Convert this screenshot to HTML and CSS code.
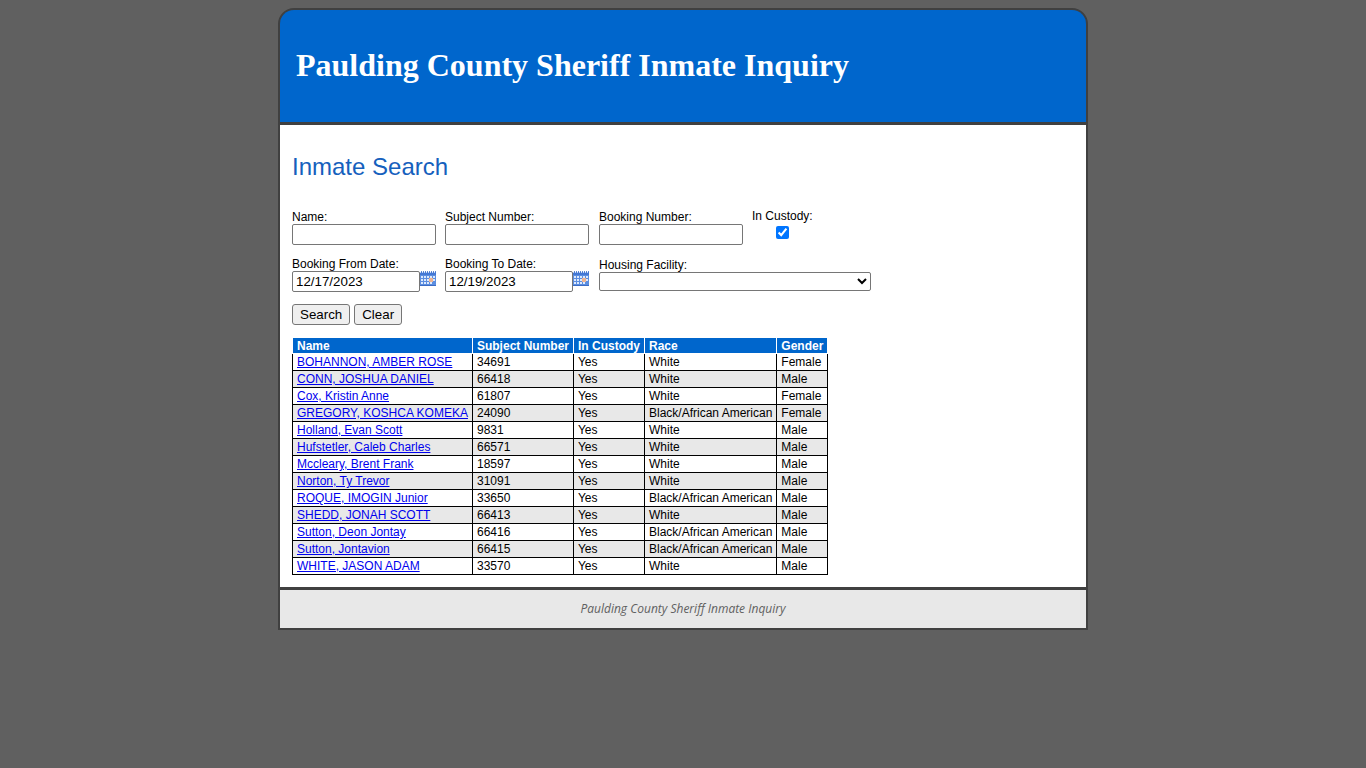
FILE: index.html
```html
<!DOCTYPE html>
<html lang="en">
<head>
    <meta charset="UTF-8">
    <meta name="viewport" content="width=device-width, initial-scale=1.0">
    <title>Paulding County Sheriff Inmate Inquiry</title>
    <link rel="stylesheet" href="styles.css">
</head>
<body>
    <!-- calendar icon used by both date fields -->
    <svg class="sprite" width="0" height="0" aria-hidden="true">
        <symbol id="calendar" viewBox="0 0 16 16">
            <rect x="0" y="1" width="16" height="14" fill="#5c8ee0"/>
            <rect x="0" y="1" width="16" height="3" fill="#4478d4"/>
            <path d="M1 0h1v1h-1zM3 0h1v1h-1zM5 0h1v1h-1zM7 0h1v1h-1zM9 0h1v1h-1zM11 0h1v1h-1zM13 0h1v1h-1zM15 0h1v1h-1z" fill="#5f88cf"/>
            <path d="M0 1h1v1h-1zM2 1h1v1h-1zM4 1h1v1h-1zM6 1h1v1h-1zM8 1h1v1h-1zM10 1h1v1h-1zM12 1h1v1h-1zM14 1h1v1h-1z" fill="#c3d6f6"/>
            <path d="M1 5h2v2h-2zM4 5h2v2h-2zM7 5h2v2h-2zM10 5h2v2h-2zM13 5h2v2h-2zM1 8h2v2h-2zM4 8h2v2h-2zM7 8h2v2h-2zM13 8h2v2h-2zM1 11h2v2h-2zM4 11h2v2h-2zM7 11h2v2h-2zM10 11h2v2h-2z" fill="#dce9fd"/>
            <rect x="9" y="7" width="4" height="4" fill="#ecb391"/>
            <rect x="0" y="14" width="16" height="1" fill="#3c6cc4"/>
        </symbol>
    </svg>

    <div class="page">
        <header class="header">
            <h1>Paulding County Sheriff Inmate Inquiry</h1>
        </header>

        <main class="main">
            <h2>Inmate Search</h2>

            <form>
                <div class="fields">
                    <div class="field">
                        <label for="name">Name:</label>
                        <input type="text" id="name">
                    </div>
                    <div class="field">
                        <label for="subjectNumber">Subject Number:</label>
                        <input type="text" id="subjectNumber">
                    </div>
                    <div class="field">
                        <label for="bookingNumber">Booking Number:</label>
                        <input type="text" id="bookingNumber">
                    </div>
                    <div class="field custody">
                        <label for="inCustody">In Custody:</label>
                        <input type="checkbox" id="inCustody" checked>
                    </div>
                    <div class="field">
                        <label for="fromDate">Booking From Date:</label>
                        <div class="date">
                            <input type="text" id="fromDate" value="12/17/2023">
                            <button type="button" class="calendar" aria-label="Pick from date"><svg width="16" height="16"><use href="#calendar"/></svg></button>
                        </div>
                    </div>
                    <div class="field">
                        <label for="toDate">Booking To Date:</label>
                        <div class="date">
                            <input type="text" id="toDate" value="12/19/2023">
                            <button type="button" class="calendar" aria-label="Pick to date"><svg width="16" height="16"><use href="#calendar"/></svg></button>
                        </div>
                    </div>
                    <div class="field facility">
                        <label for="facility">Housing Facility:</label>
                        <select id="facility"><option></option></select>
                    </div>
                </div>
                <div class="buttons">
                    <button type="submit" class="btn">Search</button>
                    <button type="reset" class="btn">Clear</button>
                </div>
            </form>

            <table class="results">
                <thead>
                    <tr><th>Name</th><th>Subject Number</th><th>In Custody</th><th>Race</th><th>Gender</th></tr>
                </thead>
                <tbody>
                    <tr><td><a href="#">BOHANNON, AMBER ROSE</a></td><td>34691</td><td>Yes</td><td>White</td><td>Female</td></tr>
                    <tr><td><a href="#">CONN, JOSHUA DANIEL</a></td><td>66418</td><td>Yes</td><td>White</td><td>Male</td></tr>
                    <tr><td><a href="#">Cox, Kristin Anne</a></td><td>61807</td><td>Yes</td><td>White</td><td>Female</td></tr>
                    <tr><td><a href="#">GREGORY, KOSHCA KOMEKA</a></td><td>24090</td><td>Yes</td><td>Black/African American</td><td>Female</td></tr>
                    <tr><td><a href="#">Holland, Evan Scott</a></td><td>9831</td><td>Yes</td><td>White</td><td>Male</td></tr>
                    <tr><td><a href="#">Hufstetler, Caleb Charles</a></td><td>66571</td><td>Yes</td><td>White</td><td>Male</td></tr>
                    <tr><td><a href="#">Mccleary, Brent Frank</a></td><td>18597</td><td>Yes</td><td>White</td><td>Male</td></tr>
                    <tr><td><a href="#">Norton, Ty Trevor</a></td><td>31091</td><td>Yes</td><td>White</td><td>Male</td></tr>
                    <tr><td><a href="#">ROQUE, IMOGIN Junior</a></td><td>33650</td><td>Yes</td><td>Black/African American</td><td>Male</td></tr>
                    <tr><td><a href="#">SHEDD, JONAH SCOTT</a></td><td>66413</td><td>Yes</td><td>White</td><td>Male</td></tr>
                    <tr><td><a href="#">Sutton, Deon Jontay</a></td><td>66416</td><td>Yes</td><td>Black/African American</td><td>Male</td></tr>
                    <tr><td><a href="#">Sutton, Jontavion</a></td><td>66415</td><td>Yes</td><td>Black/African American</td><td>Male</td></tr>
                    <tr><td><a href="#">WHITE, JASON ADAM</a></td><td>33570</td><td>Yes</td><td>White</td><td>Male</td></tr>
                </tbody>
            </table>
        </main>

        <footer class="footer">Paulding County Sheriff Inmate Inquiry</footer>
    </div>
</body>
</html>
```
FILE: styles.css
```css
* {
    box-sizing: border-box;
}
body {
    margin: 8px;
    background-color: #606060;
    font-family: Arial, "Liberation Sans", sans-serif;
    font-size: 12px;
    line-height: 14px;
    color: black;
}
.sprite {
    position: absolute;
}
.page {
    max-width: 810px;
    margin: 0 auto;
    border: 2px solid #404040;
    border-radius: 16px 16px 0 0;
    background-color: #404040;
    overflow: hidden;
}
.header {
    padding: 35px 16px 37px;
    background-color: #0066cc;
    border-bottom: 3px solid #404040;
}
.header h1 {
    margin: 0;
    font-family: "Times New Roman", "Liberation Serif", serif;
    font-size: 32px;
    line-height: 40px;
    color: white;
}
.main {
    padding: 28px 12px 12px;
    background-color: white;
}
.main h2 {
    margin: 0 0 28px;
    font-size: 24px;
    line-height: 28px;
    font-weight: normal;
    color: #1560bd;
}
.fields {
    display: grid;
    grid-template-columns: 144px 145px 144px 119px;
    gap: 11px 9px;
}
.field {
    display: flex;
    flex-direction: column;
    align-items: flex-start;
    padding-top: 1px;
}
.field input,
.field select {
    margin: 0;
    font-family: inherit;
    border: 1px solid #767676;
    border-radius: 2px;
    background-color: white;
    color: black;
}
.field input[type="text"] {
    width: 144px;
    height: 21px;
    padding: 1px 3px;
}
.custody {
    justify-self: start;
    align-items: center;
    gap: 3px;
    padding-top: 0;
}
.date {
    display: flex;
}
.date input[type="text"] {
    width: 128px;
}
.calendar {
    height: 16px;
    padding: 0;
    border: none;
    background: none;
    cursor: pointer;
}
.calendar svg {
    display: block;
}
.facility {
    grid-column: span 2;
    padding-top: 2px;
}
.facility select {
    width: 100%;
    height: 19px;
}
.buttons {
    display: flex;
    gap: 4px;
    margin: 12px 0;
}
.btn {
    height: 21px;
    padding: 0 7px;
    font-family: inherit;
    border: 1px solid #767676;
    border-radius: 3px;
    background-color: #efefef;
    color: black;
}
.results {
    border-collapse: collapse;
}
.results th,
.results td {
    padding: 1px 4px;
    border: 1px solid black;
    text-align: left;
    white-space: nowrap;
}
.results th {
    padding-bottom: 0;
    border-color: white;
    background-color: #0066cc;
    color: white;
}
.results tbody tr:nth-child(even) {
    background-color: #e8e8e8;
}
.results a {
    color: #0000ee;
}
.footer {
    padding: 12px;
    border-top: 3px solid #404040;
    background-color: #e8e8e8;
    font-family: "Trebuchet MS", "Open Sans", sans-serif;
    font-style: italic;
    text-align: center;
    color: #606060;
}
```
